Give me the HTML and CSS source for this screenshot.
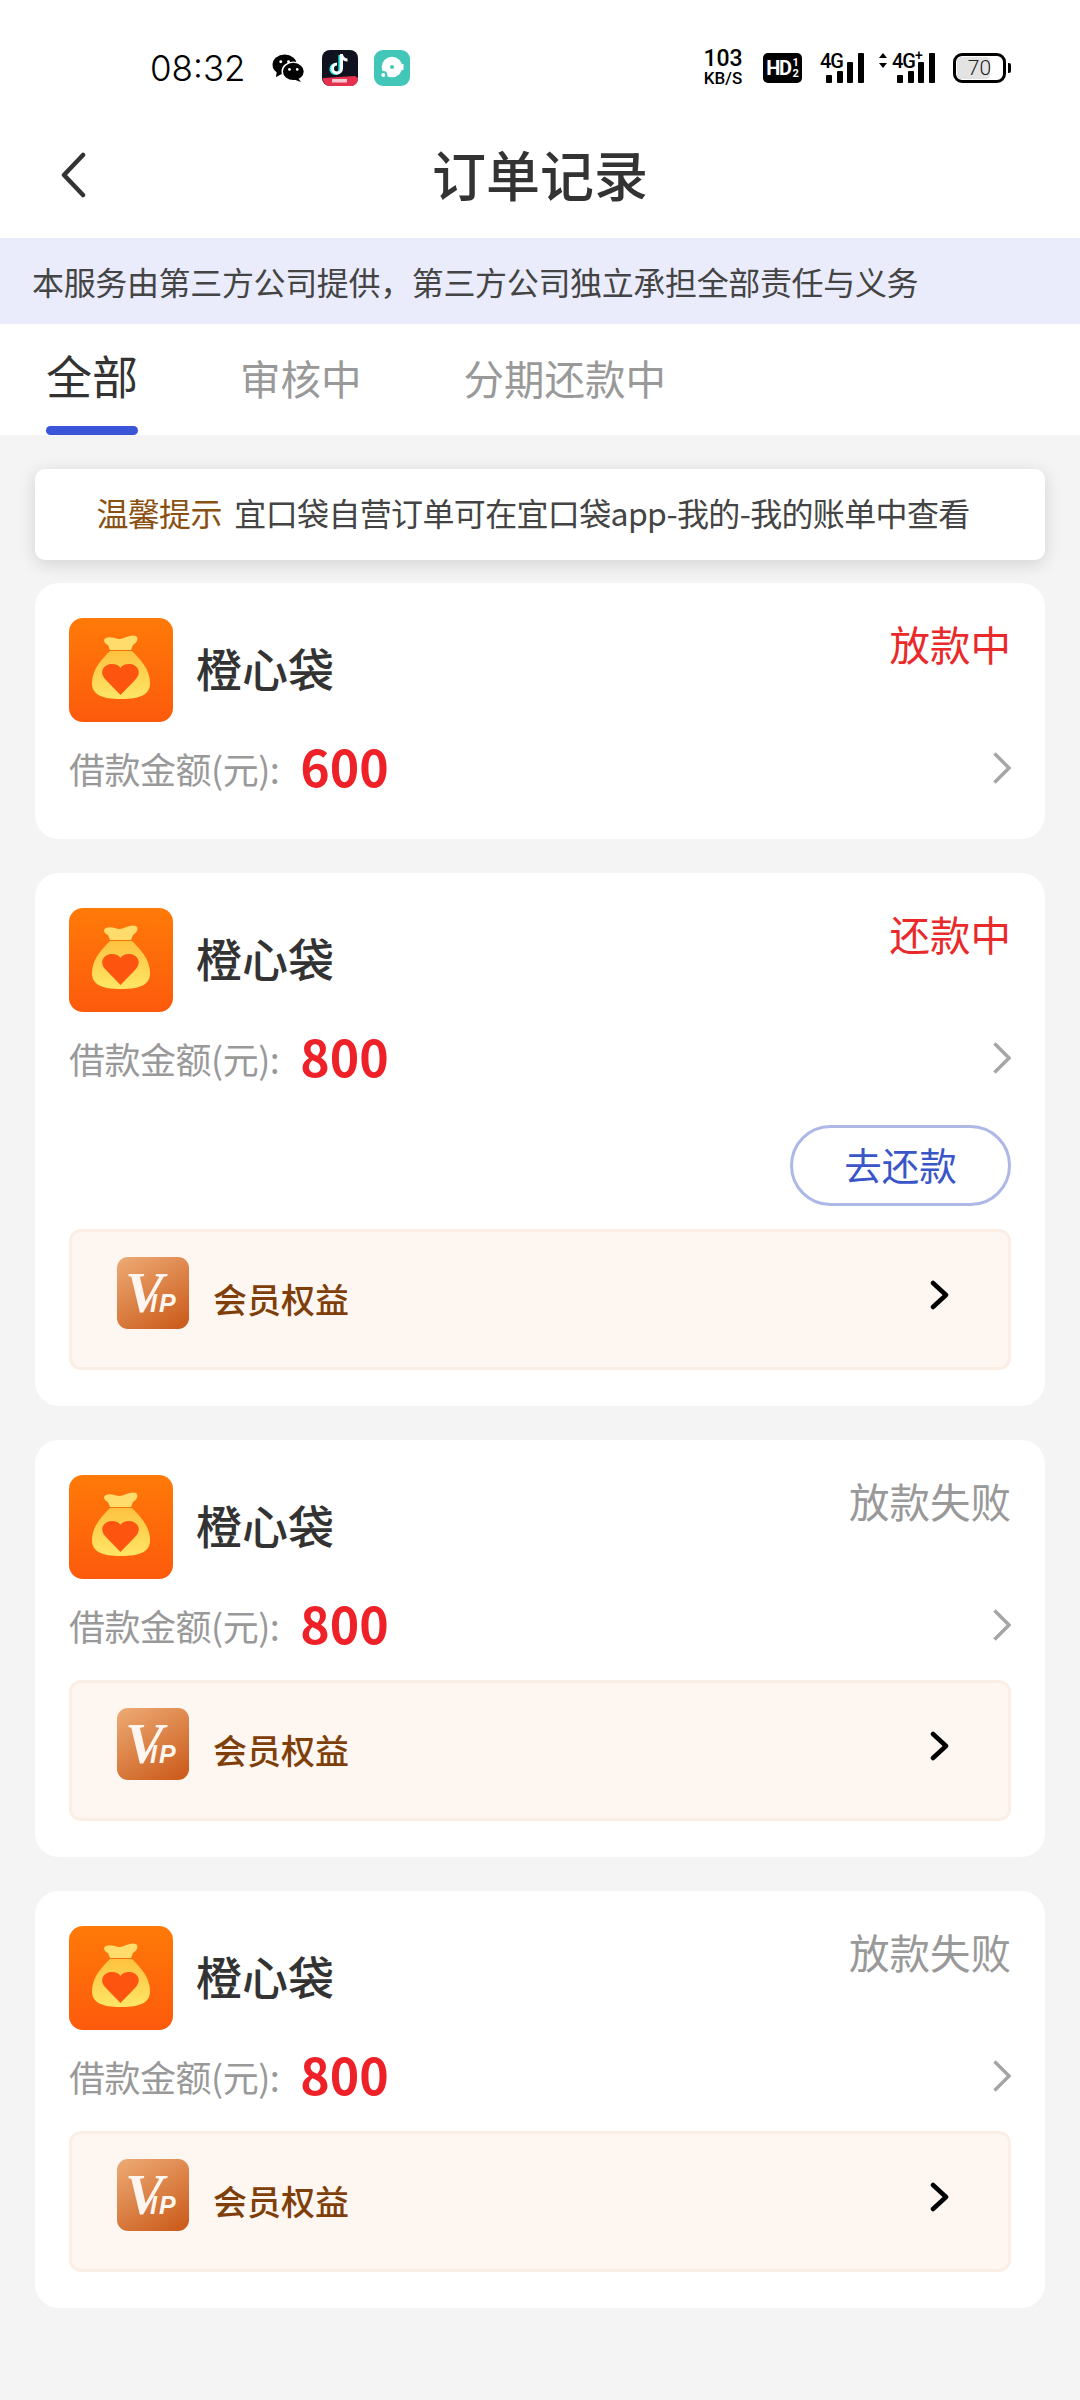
FILE: index.html
```html
<!DOCTYPE html>
<html lang="zh-CN">
  <head>
    <meta charset="UTF-8" />
    <meta name="viewport" content="width=device-width, initial-scale=1.0" />
    <title>订单记录</title>
    <link rel="stylesheet" href="styles.css">
  </head>
  <body>
    <svg class="defs" width="0" height="0">
      <defs>
        <linearGradient id="bag-bg" x1="0" y1="0" x2="0" y2="1">
          <stop offset="0" stop-color="#ff7a08" />
          <stop offset="1" stop-color="#fd5a0c" />
        </linearGradient>
        <linearGradient id="bag-body" x1="0" y1="0" x2="0" y2="1">
          <stop offset="0" stop-color="#fdc23f" />
          <stop offset="1" stop-color="#ffe666" />
        </linearGradient>
        <linearGradient id="vip-bg" x1="0.2" y1="0" x2="0.8" y2="1">
          <stop offset="0" stop-color="#eba56e" />
          <stop offset="1" stop-color="#cc5e1e" />
        </linearGradient>
        <symbol id="bag" viewBox="0 0 104 104">
          <rect width="104" height="104" rx="14" fill="url(#bag-bg)" />
          <path d="M37 20c5-2 9 1 14 1 5-1 11-5 16-3 3 2 1 7-3 9l-2 5H41l-2-5c-3-1-6-5-2-7z" fill="#ffdc6c" />
          <path d="M41 33h22c8 8 18 18 18 32 0 12-10 16-29 16s-29-4-29-16c0-14 10-24 18-32z" fill="url(#bag-body)" />
          <path d="M51.500 77 37 62c-8-8-2-16 6-16 4 0 7 1.500 8.500 4 1.500-2.500 4.500-4 8.500-4 8 0 14 8 6 16z" fill="#fd5510" />
        </symbol>
        <symbol id="vip" viewBox="0 0 72 72">
          <rect width="72" height="72" rx="11" fill="url(#vip-bg)" />
          <text x="8" y="55" class="vip-v">V</text>
          <text x="33" y="55" class="vip-ip">IP</text>
        </symbol>
        <symbol id="arrow" viewBox="0 0 18 32">
          <path d="M1.500 1.500 16 16 1.500 30.500" fill="none" stroke="currentColor" stroke-width="3.400" />
        </symbol>
        <symbol id="arrow-bold" viewBox="0 0 20 30">
          <path d="M3 3 16 15 3 27" fill="none" stroke="currentColor" stroke-width="4.500" stroke-linecap="round" stroke-linejoin="round" />
        </symbol>
      </defs>
    </svg>

    <div class="status-bar">
      <span class="clock">08:32</span>
      <svg class="ic-wechat" viewBox="0 0 34 30">
        <ellipse cx="13" cy="11" rx="12.500" ry="10.500" />
        <path d="M5 17 4 24l7-4z" />
        <ellipse cx="22" cy="18" rx="11.500" ry="9.600" stroke="#fff" stroke-width="1.500" />
        <path d="M27 25l3 4-8-3z" />
        <circle cx="9" cy="8" r="1.500" fill="#fff" /><circle cx="17" cy="8" r="1.500" fill="#fff" />
        <circle cx="18" cy="16" r="1.400" fill="#fff" /><circle cx="26" cy="16" r="1.400" fill="#fff" />
      </svg>
      <svg class="ic-app" viewBox="0 0 36 36">
        <rect width="36" height="36" rx="8" fill="#10131f" />
        <path d="M1 28 33 26l3 2v1a7 7 0 0 1-7 7H8a7 7 0 0 1-7-7z" fill="#e5304f" />
        <rect x="10" y="29" width="15" height="3.500" fill="#f8c6cf" />
        <path d="M18 5v14a4.500 4.500 0 1 1-4.500-4.500" fill="none" stroke="#25f4ee" stroke-width="3.200" />
        <path d="M19.500 4v14.500a4.500 4.500 0 1 1-4.500-4.500M19.500 5c1 3 3 5 6 5" fill="none" stroke="#fff" stroke-width="3" />
      </svg>
      <svg class="ic-app" viewBox="0 0 36 36">
        <rect width="36" height="36" rx="9" fill="#41c6b8" />
        <circle cx="18" cy="17" r="10.300" fill="#fff" />
        <circle cx="18" cy="17" r="2" fill="#41c6b8" />
        <circle cx="9.300" cy="25" r="3" fill="#fff" stroke="#41c6b8" stroke-width="2" />
        <rect x="28" y="14" width="1.500" height="6" fill="#fff" />
      </svg>
      <div class="status-right">
        <span class="speed"><b>103</b><small>KB/S</small></span>
        <span class="hd">HD<span class="hd-sub"><i>1</i><i>2</i></span></span>
        <span class="net">
          <span class="net-label">4G</span>
          <span class="bars"><i class="b1"></i><i class="b2"></i><i class="b3"></i><i class="b4"></i></span>
        </span>
        <span class="net net-data">
          <svg class="updown" viewBox="0 0 8 15"><path d="M4 0 8 5H0zM4 15 0 10h8z" /></svg>
          <span class="net-label">4G<sup>+</sup></span>
          <span class="bars"><i class="b1"></i><i class="b2"></i><i class="b3"></i><i class="b4"></i></span>
        </span>
        <span class="battery"><span class="battery-fill"></span><span class="battery-level">70</span></span>
      </div>
    </div>

    <header class="title-bar">
      <svg class="back" viewBox="0 0 26 46"><path d="M23 3 4 23l19 20" /></svg>
      <h1>订单记录</h1>
    </header>

    <div class="banner">本服务由第三方公司提供，第三方公司独立承担全部责任与义务</div>

    <nav class="tabs">
      <a class="tab tab-active">全部</a>
      <a class="tab">审核中</a>
      <a class="tab">分期还款中</a>
    </nav>

    <main class="list">
      <div class="notice"><em>温馨提示</em> 宜口袋自营订单可在宜口袋app-我的-我的账单中查看</div>

      <section class="card">
        <div class="card-top">
          <svg class="logo"><use href="#bag" /></svg>
          <span class="name">橙心袋</span>
          <span class="state state-red">放款中</span>
        </div>
        <div class="amount">
          <span class="amount-label">借款金额(元):</span>
          <span class="amount-value">600</span>
          <svg class="arrow"><use href="#arrow" /></svg>
        </div>
      </section>

      <section class="card">
        <div class="card-top">
          <svg class="logo"><use href="#bag" /></svg>
          <span class="name">橙心袋</span>
          <span class="state state-red">还款中</span>
        </div>
        <div class="amount">
          <span class="amount-label">借款金额(元):</span>
          <span class="amount-value">800</span>
          <svg class="arrow"><use href="#arrow" /></svg>
        </div>
        <div class="actions"><button class="repay">去还款</button></div>
        <div class="vip-row">
          <svg class="vip-icon"><use href="#vip" /></svg>
          <span class="vip-text">会员权益</span>
          <svg class="vip-arrow"><use href="#arrow-bold" /></svg>
        </div>
      </section>

      <section class="card">
        <div class="card-top">
          <svg class="logo"><use href="#bag" /></svg>
          <span class="name">橙心袋</span>
          <span class="state">放款失败</span>
        </div>
        <div class="amount">
          <span class="amount-label">借款金额(元):</span>
          <span class="amount-value">800</span>
          <svg class="arrow"><use href="#arrow" /></svg>
        </div>
        <div class="vip-row">
          <svg class="vip-icon"><use href="#vip" /></svg>
          <span class="vip-text">会员权益</span>
          <svg class="vip-arrow"><use href="#arrow-bold" /></svg>
        </div>
      </section>

      <section class="card">
        <div class="card-top">
          <svg class="logo"><use href="#bag" /></svg>
          <span class="name">橙心袋</span>
          <span class="state">放款失败</span>
        </div>
        <div class="amount">
          <span class="amount-label">借款金额(元):</span>
          <span class="amount-value">800</span>
          <svg class="arrow"><use href="#arrow" /></svg>
        </div>
        <div class="vip-row">
          <svg class="vip-icon"><use href="#vip" /></svg>
          <span class="vip-text">会员权益</span>
          <svg class="vip-arrow"><use href="#arrow-bold" /></svg>
        </div>
      </section>
    </main>
  </body>
</html>
```

FILE: styles.css
```css
* {
  box-sizing: border-box;
}
html,
body {
  margin: 0;
  height: 2400px;
}
body {
  width: 1080px;
  overflow: hidden;
  font-family: "Noto Sans CJK SC", "Noto Sans", sans-serif;
  color: #333;
  background-color: #f4f4f4;
}
.defs {
  display: block;
  height: 0;
}

/* status bar */
.status-bar {
  display: flex;
  align-items: center;
  height: 130px;
  padding: 6px 74px 0 150px;
  background: #fff;
  color: #000;
}
.clock {
  width: 122px;
  font: 300 35px Inter, Roboto, sans-serif;
}
.ic-wechat {
  width: 33px;
  height: 29px;
  margin-right: 17px;
}
.ic-app {
  width: 36px;
  height: 36px;
  margin-right: 16px;
}
.status-right {
  display: flex;
  align-items: center;
  margin-left: auto;
  font-family: Roboto, sans-serif;
}
.speed {
  display: flex;
  flex-direction: column;
  align-items: center;
  width: 40px;
  margin-right: 20px;
}
.speed b {
  font-size: 23px;
  font-weight: 500;
  line-height: 20px;
}
.speed small {
  font-size: 17px;
  font-weight: 500;
  line-height: 18px;
}
.hd {
  display: flex;
  align-items: center;
  justify-content: center;
  width: 39px;
  height: 30px;
  margin-right: 18px;
  border-radius: 5px;
  background: #000;
  color: #fff;
  font-size: 20px;
  font-weight: 700;
  letter-spacing: -1.500px;
}
.hd-sub {
  display: flex;
  flex-direction: column;
  margin-left: 2px;
  font-size: 11px;
  line-height: 11px;
  letter-spacing: 0;
}
.hd-sub i {
  font-style: normal;
}
.net {
  position: relative;
  display: flex;
  align-items: flex-end;
  width: 44px;
  height: 30px;
  margin-right: 15px;
  padding-left: 6px;
}
.net-data {
  width: 56px;
  margin-right: 18px;
  padding-left: 18px;
}
.net-label {
  position: absolute;
  left: 0;
  top: -2px;
  font-size: 20px;
  font-weight: 500;
  line-height: 20px;
  letter-spacing: -1px;
}
.net-data .net-label {
  left: 13px;
}
.net-label sup {
  font-size: 14px;
  line-height: 0;
}
.updown {
  position: absolute;
  left: 0;
  top: 0;
  width: 8px;
  height: 15px;
}
.bars {
  display: flex;
  align-items: flex-end;
  gap: 4.500px;
  height: 30px;
}
.bars i {
  width: 6px;
  border-radius: 1px;
  background: #000;
}
.bars .b1 {
  height: 8px;
}
.bars .b2 {
  height: 12px;
}
.bars .b3 {
  height: 21px;
}
.bars .b4 {
  height: 30px;
}
.battery {
  position: relative;
  display: flex;
  align-items: center;
  justify-content: center;
  width: 53px;
  height: 30px;
  border: 3px solid #000;
  border-radius: 9px;
}
.battery::after {
  content: "";
  position: absolute;
  right: -8px;
  top: 7px;
  width: 3px;
  height: 10px;
  border-radius: 0 2px 2px 0;
  background: #000;
}
.battery-fill {
  position: absolute;
  left: 1px;
  top: 1px;
  bottom: 1px;
  width: 70%;
  border-radius: 4px;
  background: #e3e3e3;
}
.battery-level {
  position: relative;
  color: #222;
  font-size: 21px;
  font-weight: 300;
  line-height: 24px;
}

/* header */
.title-bar {
  position: relative;
  display: flex;
  align-items: center;
  justify-content: center;
  height: 108px;
  padding-bottom: 21px;
  background: #fff;
}
.title-bar h1 {
  margin: 0;
  font-size: 54px;
  font-weight: 500;
  line-height: 87px;
  color: #333;
}
.back {
  position: absolute;
  left: 60px;
  top: 22px;
  width: 26px;
  height: 46px;
  fill: none;
  stroke: #333;
  stroke-width: 4.500px;
  stroke-linecap: round;
  stroke-linejoin: round;
}
.banner {
  height: 86px;
  padding-left: 32px;
  background: #eaecfc;
  font-size: 32px;
  letter-spacing: -0.350px;
  line-height: 86px;
  color: #444;
}

/* tabs */
.tabs {
  display: flex;
  align-items: flex-start;
  gap: 102px;
  height: 111px;
  padding-left: 46px;
  background: #fff;
}
.tab {
  position: relative;
  height: 111px;
  margin-top: -2px;
  font-size: 40.500px;
  line-height: 111px;
  color: #999;
}
.tab-active {
  margin-top: -5px;
  font-size: 46px;
  color: #333;
}
.tab-active::after {
  content: "";
  position: absolute;
  left: 0;
  right: 0;
  bottom: -5px;
  height: 9px;
  border-radius: 5px;
  background: #3a55d8;
}

/* order list */
.list {
  display: flex;
  flex-direction: column;
  padding: 34px 35px 0;
}
.notice {
  height: 91px;
  margin-bottom: 23px;
  padding-right: 14px;
  border-radius: 10px;
  background: #fff;
  box-shadow: 0 4px 18px rgba(0, 0, 0, 0.14);
  font-size: 32px;
  letter-spacing: -0.650px;
  line-height: 86px;
  text-align: center;
  color: #444;
}
.notice em {
  margin-right: 6px;
  font-style: normal;
  color: #8a5012;
}
.card {
  display: flex;
  flex-direction: column;
  min-height: 256px;
  margin-bottom: 34px;
  padding: 35px 34px 36px;
  border-radius: 24px;
  background: #fff;
}
.card-top {
  display: flex;
  align-items: center;
  height: 104px;
}
.logo {
  flex: none;
  width: 104px;
  height: 104px;
}
.name {
  margin-left: 23px;
  padding-bottom: 6px;
  font-size: 46px;
  font-weight: 500;
  color: #333;
}
.state {
  align-self: flex-start;
  margin-left: auto;
  font-size: 40.500px;
  line-height: 51px;
  color: #999;
}
.state-red {
  color: #ea2a2a;
}
.amount {
  display: flex;
  align-items: center;
  height: 64px;
  margin: 14px 0 2px;
}
.amount-label {
  font-size: 36px;
  letter-spacing: -0.500px;
  color: #999;
}
.amount-value {
  margin-left: 21px;
  padding-bottom: 7px;
  font-size: 50px;
  font-weight: 700;
  color: #ee2129;
}
.arrow {
  width: 18px;
  height: 32px;
  margin-left: auto;
  color: #a5a5a5;
}
.actions {
  display: flex;
  justify-content: flex-end;
  margin: 33px 0 2px;
}
.repay {
  width: 221px;
  height: 81px;
  padding: 0 0 4px;
  border: 3px solid #aeb8e6;
  border-radius: 41px;
  background: #fff;
  font-family: inherit;
  font-size: 37.500px;
  color: #3a55c8;
}
.vip-row {
  display: flex;
  align-items: center;
  height: 141px;
  margin-top: 21px;
  padding: 0 58px 0 45px;
  border: 3px solid #fbeee4;
  border-radius: 12px;
  background: #fef7f1;
}
.vip-icon {
  flex: none;
  width: 72px;
  height: 72px;
  margin-top: -14px;
}
.vip-v {
  font: italic 700 58px "Liberation Serif", serif;
  fill: #fdf6f0;
}
.vip-ip {
  font: italic 700 25px "Liberation Sans", sans-serif;
  letter-spacing: 2px;
  fill: #fdf6f0;
}
.vip-text {
  margin-left: 24px;
  padding-bottom: 3px;
  font-size: 34px;
  font-weight: 500;
  color: #7f3f0a;
}
.vip-arrow {
  width: 20px;
  height: 30px;
  margin-left: auto;
  margin-top: -9px;
  color: #000;
}
```
